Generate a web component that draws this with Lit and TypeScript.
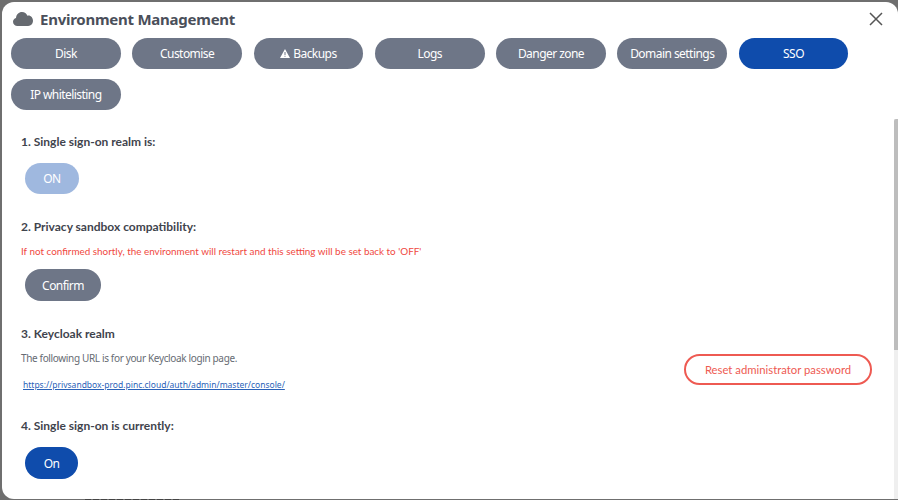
import { LitElement, html, css } from "lit";
import { customElement } from "lit/decorators.js";

@customElement("app-root")
export class AppRoot extends LitElement {
  static styles = css`
    :host { display: block; position: relative; width: 898px; height: 500px; overflow: hidden; background: #6f6f6f; font-family: "Noto Sans", "Open Sans", sans-serif; }
    .dialog { box-sizing: border-box; height: 496.500px; margin: 2px 0 0 2px; background: #fff; border-radius: 12px 12px 0 12px; display: flex; flex-direction: column; position: relative; overflow: hidden; }
    .head { display: flex; align-items: center; justify-content: space-between; height: 34px; padding: 0 15.500px 0 11px; flex: none; }
    .title { display: flex; align-items: center; gap: 7px; font-size: 15px; font-weight: 700; letter-spacing: -0.25px; color: #4a4f5a; margin: 0; }
    .title svg { display: block; }
    .close { display: block; }
    .tabs { display: flex; flex-wrap: wrap; gap: 10px 11.6px; padding: 2px 9px 0; flex: none; }
    .btn { box-sizing: border-box; height: 31px; border-radius: 16px; border: 0; font: 400 12px "Noto Sans", sans-serif; letter-spacing: -0.55px; color: #fff; background: #6e7687; display: inline-flex; align-items: center; justify-content: center; gap: 3px; padding: 0; }
    .tab { width: 109.7px; }
    .active { background: #0f4cac; }
    .content { flex: 1; padding: 0 0 0 19px; position: relative; }
    h3 { margin: 0; font: 700 12px/17px "Lato", sans-serif; color: #3f444d; }
    .s1 { padding-top: 23px; }
    .s2 { padding-top: 24px; }
    .s3 { padding-top: 24px; display: flex; justify-content: space-between; padding-right: 26px; }
    .s4 { padding-top: 25px; }
    .on { width: 54px; margin: 13px 0 0 4px; background: #9fb8df; }
    .warn { margin: 9px 0 0; font: 400 9.9px/14px "Lato", sans-serif; color: #f0483e; }
    .confirm { width: 76px; height: 32px; margin: 11px 0 0 4px; }
    .text { margin: 9px 0 0; font: 400 10px/14px "Noto Sans", sans-serif; letter-spacing: -0.35px; color: #666b73; }
    .url { display: block; margin: 13px 0 0 2px; font-size: 8.500px; line-height: 14px; color: #2a62b8; text-decoration: underline; white-space: nowrap; }
    .reset { box-sizing: border-box; width: 188px; height: 31px; margin-top: 29px; border-radius: 16px; border: 2px solid #ee5a52; background: #fff; color: #ee5a52; font: 400 11.3px "Lato", sans-serif; padding: 0; }
    .live { width: 53px; height: 32px; margin: 13px 0 0 4px; background: #0f4cac; }
    .track { position: absolute; right: 0; top: 117px; bottom: 0; width: 4px; background: #efefef; }
    .thumb { height: 231px; width: 4px; background: #bdbdbd; border-radius: 2px 0 0 0; }
    .behind { position: absolute; left: 85px; bottom: 0; width: 95px; height: 1px; background: repeating-linear-gradient(90deg, #444 0 6px, transparent 6px 8px); }
  `;

  render() {
    const tabs = ["Disk", "Customise", "Backups", "Logs", "Danger zone", "Domain settings", "SSO", "IP whitelisting"];
    return html`<div class="dialog">
      <div class="head">
        <h1 class="title">
          <svg width="20" height="14" viewBox="0 0 20 14"><path fill="#666a70" d="M4.500 14C2 14 0 12.200 0 9.800c0-1.900 1.200-3.400 3-3.900C3.300 2.500 5.800 0 9 0c2.500 0 4.600 1.500 5.400 3.700.4-.1.800-.2 1.200-.2C18 3.500 20 6 20 8.800 20 11.700 17.900 14 15.200 14z"/></svg>
          Environment Management
        </h1>
        <svg class="close" width="14" height="14" viewBox="0 0 14 14"><path d="M1 1l12 12M13 1L1 13" stroke="#555" stroke-width="1.500" fill="none"/></svg>
      </div>
      <div class="tabs">
        ${tabs.map((t) => html`<button class="btn tab ${t === "SSO" ? "active" : ""}">
          ${t === "Backups" ? html`<svg width="10" height="9" viewBox="0 0 10 9"><path fill="#fff" fill-rule="evenodd" d="M5 0l5 9H0zM4.500 3v3h1V3zm0 3.700v1h1v-1z"/></svg>` : ""}${t}</button>`)}
      </div>
      <div class="content">
        <section class="s1"><h3>1. Single sign-on realm is:</h3><button class="btn on">ON</button></section>
        <section class="s2">
          <h3>2. Privacy sandbox compatibility:</h3>
          <p class="warn">If not confirmed shortly, the environment will restart and this setting will be set back to 'OFF'</p>
          <button class="btn confirm">Confirm</button>
        </section>
        <section class="s3">
          <div>
            <h3>3. Keycloak realm</h3>
            <p class="text">The following URL is for your Keycloak login page.</p>
            <a class="url">https://privsandbox-prod.pinc.cloud/auth/admin/master/console/</a>
          </div>
          <button class="reset">Reset administrator password</button>
        </section>
        <section class="s4"><h3>4. Single sign-on is currently:</h3><button class="btn live">On</button></section>
      </div>
      <div class="track"><div class="thumb"></div></div>
    </div>
    <div class="behind"></div>`;
  }
}
